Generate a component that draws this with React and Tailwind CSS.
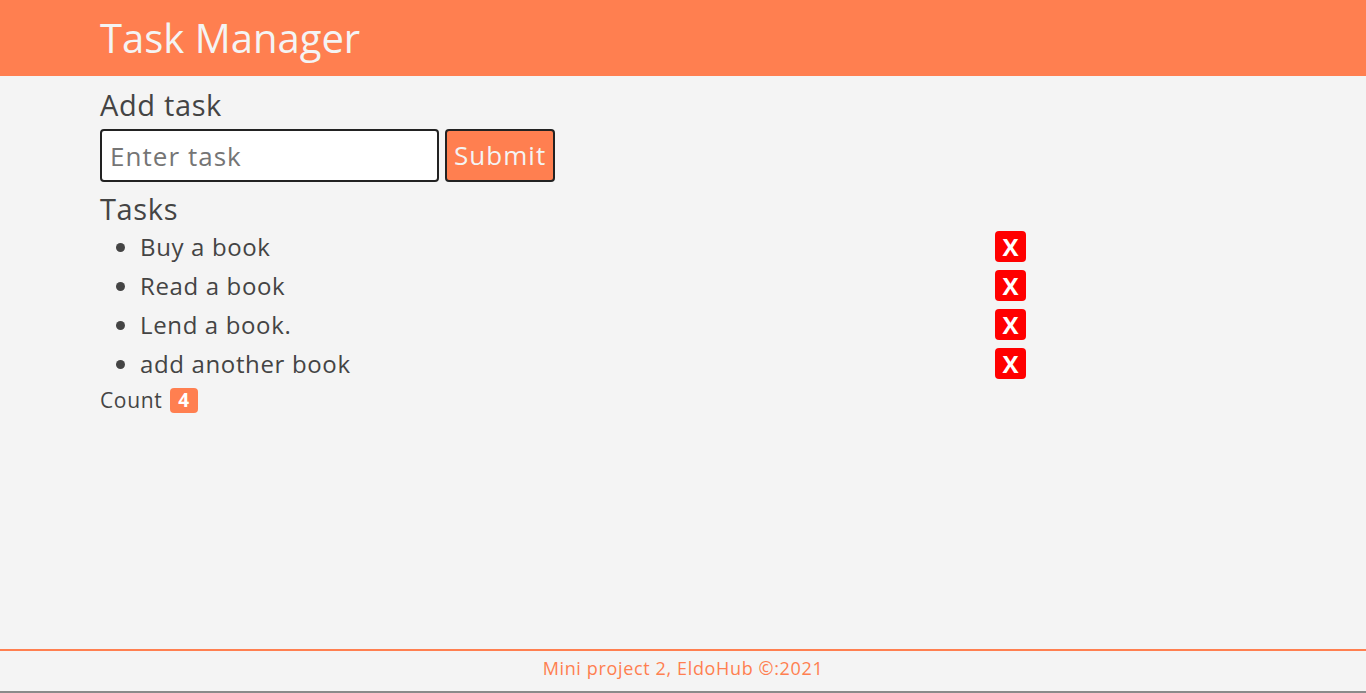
import React, { useState } from "react";

const initialTasks = ["Buy a book", "Read a book", "Lend a book.", "add another book"];

const App = () => {
  const [tasks, setTasks] = useState(initialTasks);
  const [text, setText] = useState("");

  const addTask = (e) => {
    e.preventDefault();
    if (!text.trim()) return;
    setTasks([...tasks, text.trim()]);
    setText("");
  };

  return (
    <div
      className="flex min-h-[693px] flex-col bg-[#f4f4f4] tracking-[0.04em] text-[#444]"
      style={{ fontFamily: '"Open Sans", "Liberation Sans", sans-serif' }}
    >
      {/* Header */}
      <header className="h-[76px] bg-[#ff7f50] px-[100px]">
        <h1 className="pt-[12px] text-[40px] font-medium leading-[52px] tracking-normal text-[#f4f4f4]">
          Task Manager
        </h1>
      </header>

      <main className="flex-1 px-[100px]">
        <h2 className="mt-[10px] text-[29px] font-medium leading-[38px]">Add task</h2>
        <form onSubmit={addTask} className="mt-[5px] flex gap-[6px]">
          <input
            value={text}
            onChange={(e) => setText(e.target.value)}
            placeholder="Enter task"
            className="h-[53px] w-[339px] rounded-[4px] border-2 border-[#222] bg-white px-[8px] text-[26px] tracking-[0.04em] text-[#444] outline-none placeholder:text-[#757575]"
          />
          <button
            type="submit"
            className="h-[53px] rounded-[4px] border-2 border-[#222] bg-[#ff7f50] px-[7px] text-[26px] tracking-[0.04em] text-[#f4f4f4]"
          >
            Submit
          </button>
        </form>

        <h2 className="mt-[9px] text-[29px] font-medium leading-[36px]">Tasks</h2>
        <ul className="w-[926px] list-disc pl-[40px]">
          {tasks.map((task, i) => (
            <li key={i} className="text-[24px] leading-[39px]">
              <div className="flex items-center justify-between">
                <span>{task}</span>
                <button
                  onClick={() => setTasks(tasks.filter((_, j) => j !== i))}
                  className="flex h-[31px] w-[31px] items-center justify-center rounded-[4px] bg-[#ff0000] text-[24px] font-bold leading-none tracking-normal text-white"
                >
                  X
                </button>
              </div>
            </li>
          ))}
        </ul>
        <div className="mt-[2px] flex items-center gap-[8px] text-[21px] leading-[30px]">
          <span>Count</span>
          <span className="rounded-[4px] bg-[#ff7f50] px-[8px] text-[19px] font-bold leading-[25px] text-white">
            {tasks.length}
          </span>
        </div>
      </main>

      <footer className="border-t-2 border-[#ff7f50] pb-[9px] pt-[3px] text-center text-[18px] leading-[28px] text-[#ff7f50]">
        Mini project 2, EldoHub ©:2021
      </footer>
      <div className="h-[2px] bg-[#8a8a8a]"></div>
    </div>
  );
};

export default App;
